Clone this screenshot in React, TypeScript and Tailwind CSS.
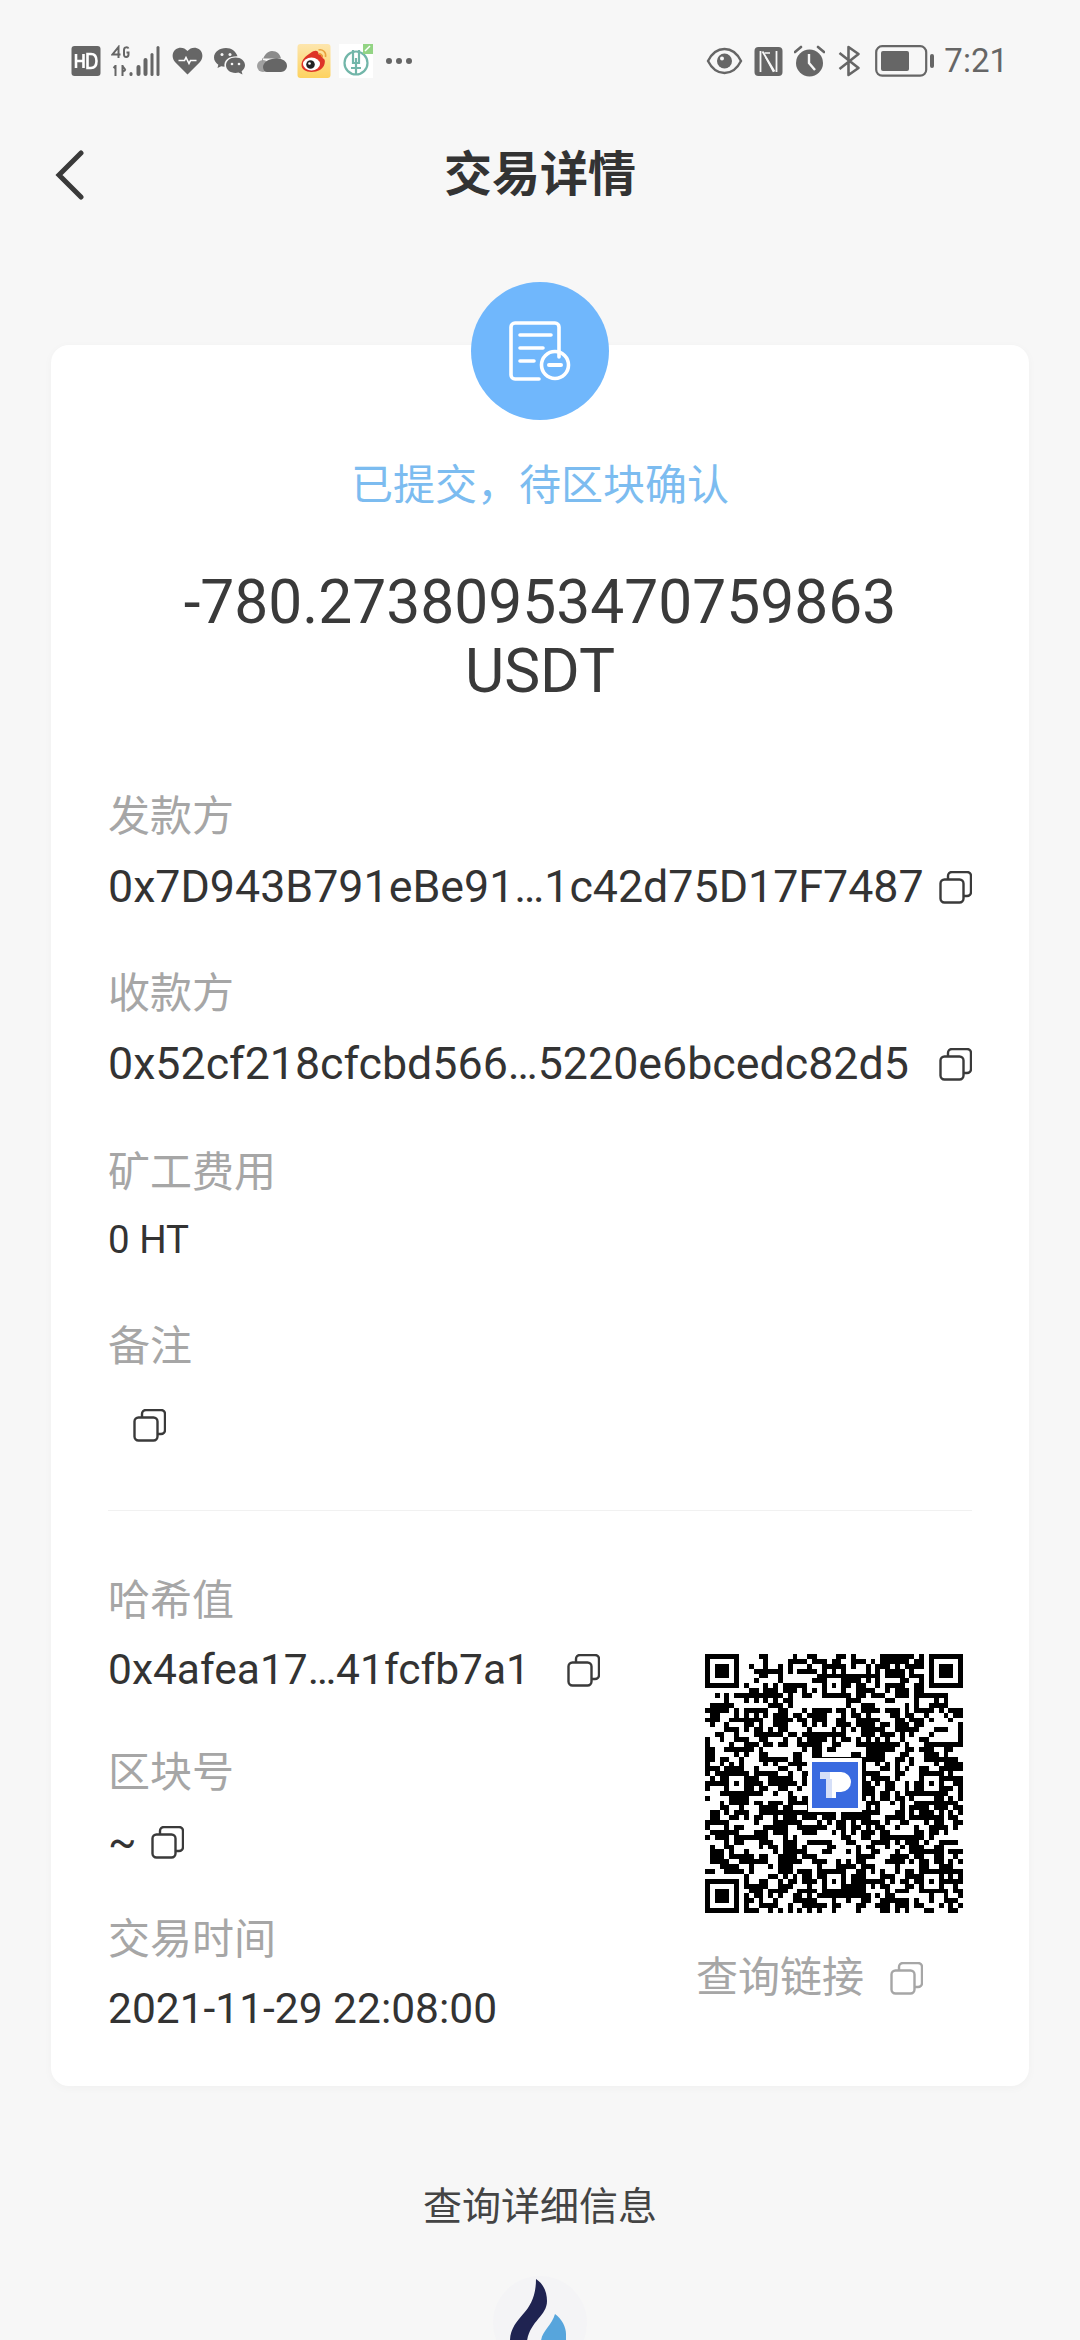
import { useMemo } from "react";

const CopyIcon = ({ className = "text-[#3a3a3a]" }: { className?: string }) => (
  <svg viewBox="0 0 33 33" className={`w-[33px] h-[33px] shrink-0 ${className}`} fill="none" stroke="currentColor" strokeWidth="2.4">
    <rect x="1.5" y="8.5" width="23" height="23" rx="4" />
    <path d="M9 8.5V5a4 4 0 0 1 4-4h15a4 4 0 0 1 4 4v16a4 4 0 0 1-4 4h-3.5" />
  </svg>
);

// fake qr, same module grid as the picture (53 x 53)
const QrCode = () => {
  const path = useMemo(() => {
    const n = 53;
    let seed = 20211129;
    const rnd = () => {
      seed = (seed * 1103515245 + 12345) & 0x7fffffff;
      return (seed >> 12) % 100;
    };
    const grid: boolean[][] = [];
    for (let y = 0; y < n; y++) {
      const row: boolean[] = [];
      for (let x = 0; x < n; x++) {
        const left = x > 0 ? row[x - 1] : false;
        const up = y > 0 ? grid[y - 1][x] : false;
        row.push(rnd() < (left || up ? 60 : 38));
      }
      grid.push(row);
    }
    // finder patterns keep a white ring, alignment ones do not
    const stamp = (ox: number, oy: number, size: number, ring: boolean) => {
      const from = ring ? -1 : 0;
      const to = ring ? size : size - 1;
      for (let y = from; y <= to; y++) {
        for (let x = from; x <= to; x++) {
          const gx = ox + x;
          const gy = oy + y;
          if (gx < 0 || gy < 0 || gx >= n || gy >= n) continue;
          const edge = x === 0 || y === 0 || x === size - 1 || y === size - 1;
          const inside = x >= 0 && y >= 0 && x < size && y < size;
          const core = x >= 2 && y >= 2 && x < size - 2 && y < size - 2;
          grid[gy][gx] = inside && (edge || core);
        }
      }
    };
    stamp(0, 0, 7, true);
    stamp(46, 0, 7, true);
    stamp(0, 46, 7, true);
    for (const [ax, ay] of [[24, 4], [4, 24], [44, 24], [24, 44], [44, 44]]) {
      stamp(ax, ay, 5, false);
    }
    let d = "";
    grid.forEach((row, y) =>
      row.forEach((on, x) => {
        if (on) d += `M${x} ${y}h1v1h-1z`;
      })
    );
    return d;
  }, []);

  return (
    <div className="relative w-[258px] h-[259px]">
      <svg viewBox="0 0 53 53" shapeRendering="crispEdges" preserveAspectRatio="none" className="w-full h-full">
        <path d={path} fill="#000" />
      </svg>
      <div className="absolute left-[103px] top-[104px] w-[54px] h-[54px] bg-white flex items-center justify-center">
        <svg viewBox="0 0 46 46" className="w-[46px] h-[46px]">
          <rect width="46" height="46" fill="#3a6be0" />
          <path d="M8 10h12v7H8z" fill="#d5dff8" />
          <path d="M14 10h6v26h-6z" fill="#d5dff8" />
          <path d="M18 10h11a10 10 0 0 1 0 20h-5v6h-4V17h-2z" fill="#fff" />
        </svg>
      </div>
    </div>
  );
};

const StatusLeft = () => (
  <div className="flex items-center">
    <svg viewBox="0 0 29 30" className="w-[30px] h-[30px]">
      <rect width="29" height="30" rx="3" fill="#666" />
      <path d="M4.500 8v14M12 8v14M4.500 15H12M16 8v14h3.500c3.500 0 5.500-2.500 5.500-7s-2-7-5.500-7z" fill="none" stroke="#fff" strokeWidth="2.600" />
    </svg>
    <svg viewBox="0 0 49 32" className="w-[50px] h-[32px] ml-[10px]">
      <g fill="none" stroke="#666" strokeWidth="2">
        <path d="M7 13V2L1 9.500h8M17 3.500c-.6-1.500-4.500-2-4.500 1.500v4.500c0 3.500 4.500 3 4.500 0V7.500h-2" />
        <path d="M4 21l-2 2M4 20v11M11 20v11M11 21l3 4M14 25l-3 2" />
      </g>
      <rect x="18" y="27" width="3" height="4" rx="1.500" fill="#666" />
      <rect x="25" y="20" width="4" height="11" rx="2" fill="#666" />
      <rect x="32" y="13" width="4" height="18" rx="2" fill="#666" />
      <rect x="39" y="8" width="3" height="23" rx="1.500" fill="#666" />
      <rect x="45" y="1" width="3" height="30" rx="1.500" fill="#666" />
    </svg>
    <svg viewBox="0 0 30 28" className="w-[31px] h-[28px] ml-[11px]">
      <path d="M15 27.500 2.500 15C-1 11-.5 5.500 3 2.500 7-.5 12 .5 15 4c3-3.500 8-4.500 12-1.500 3.500 3 4 8.500.500 12.500z" fill="#666" />
      <path d="M6 13.500h6l1.500-3 3 6 1.500-3h6" fill="none" stroke="#fff" strokeWidth="1.600" />
    </svg>
    <svg viewBox="0 0 31 28" className="w-[31px] h-[28px] ml-[11px]">
      <path d="M12 1C5.500 1 0 5 0 10.500c0 3 1.800 5.500 4.300 7.200L3.500 21l3.700-1.800c1.100.3 2.100.5 3.300.5C9.500 13 15 9 23.500 9.200 22 4.500 17.500 1 12 1z" fill="#666" />
      <path d="M21.500 10.500C16 10.500 12 14 12 18.300s4 7.700 9.500 7.700c1 0 2-.1 3-.4L28.500 27.500l-.9-3.300c2-1.500 3.400-3.500 3.400-5.900 0-4.300-4-7.800-9.500-7.800z" fill="#666" />
      <circle cx="8" cy="7.500" r="1.500" fill="#f7f7f7" />
      <circle cx="16" cy="7.500" r="1.500" fill="#f7f7f7" />
      <circle cx="18" cy="17" r="1.300" fill="#f7f7f7" />
      <circle cx="25" cy="17" r="1.300" fill="#f7f7f7" />
    </svg>
    <svg viewBox="0 0 30 21" className="w-[30px] h-[21px] ml-[12px]">
      <circle cx="6" cy="15" r="6" fill="#a0a0a0" />
      <path d="M5 12C6 5 10 0 15 0s8 3 9 7.500H5z" fill="#8b8b8b" />
      <path d="M10 21c-2 0-4-2-4-5s3-7 9-8c3-1 5-1 9 0 3 1 6 3 6 7 0 3-3 6-6 6z" fill="#666" />
    </svg>
    <svg viewBox="0 0 33 34" className="w-[34px] h-[34px] ml-[10px]">
      <defs>
        <linearGradient id="wb" x1="0" y1="0" x2="0" y2="1">
          <stop offset="0" stopColor="#fde6ae" />
          <stop offset="1" stopColor="#fdd25f" />
        </linearGradient>
      </defs>
      <rect width="33" height="34" rx="3" fill="url(#wb)" />
      <path d="M13 9c4-3 8-3 8 1 3-1 5 1 4 4 2 1 3 2 2 6-1 5-7 8-13 8-6 0-10-3-10-7 0-5 4-9 9-12z" fill="#de3327" />
      <ellipse cx="14" cy="20" rx="8.500" ry="6.500" fill="#fff" />
      <circle cx="13" cy="20.500" r="4.300" fill="#222" />
      <circle cx="12" cy="19.500" r="1.300" fill="#fff" />
      <path d="M21 6c4-1 8 2 7 7M21 10c2-.5 4 1 3.500 3" fill="none" stroke="#e9a23c" strokeWidth="1.600" />
    </svg>
    <svg viewBox="0 0 34 34" className="w-[34px] h-[34px] ml-[8px]">
      <rect width="34" height="34" fill="#fff" />
      <circle cx="17" cy="19" r="11.500" fill="none" stroke="#72b6a9" strokeWidth="2.200" />
      <path d="M14 6v13h6V6M17 14v16M12 24h10" fill="none" stroke="#72b6a9" strokeWidth="2.200" />
      <path d="M24 0h10v10z" fill="#fff" />
      <rect x="24" y="0" width="10" height="10" fill="#93d484" />
      <path d="M26 7l5-5" stroke="#fff" strokeWidth="1.500" />
    </svg>
    <div className="flex items-center gap-[4px] ml-[13px]">
      <div className="w-[6px] h-[6px] rounded-full bg-[#666]" />
      <div className="w-[6px] h-[6px] rounded-full bg-[#666]" />
      <div className="w-[6px] h-[6px] rounded-full bg-[#666]" />
    </div>
  </div>
);

const StatusRight = () => (
  <div className="flex items-center">
    <svg viewBox="0 0 36 28" className="w-[37px] h-[28px]">
      <path d="M1.500 14C5 7 11 2 18 2s13 5 16.500 12C31 21 25 26 18 26S5 21 1.500 14z" fill="none" stroke="#666" strokeWidth="2.400" />
      <circle cx="18" cy="14" r="7.500" fill="#666" />
      <circle cx="15.500" cy="11.500" r="2" fill="#f7f7f7" />
    </svg>
    <svg viewBox="0 0 28 29" className="w-[29px] h-[29px] ml-[11px]">
      <rect width="28" height="29" rx="4" fill="#666" />
      <path d="M6 4v21M8 4.500 20 24.500M22 4v21" fill="none" stroke="#f7f7f7" strokeWidth="1.800" />
      <path d="M10 6h5.500M11 10l8 15" fill="none" stroke="#f7f7f7" strokeWidth="1.500" />
    </svg>
    <svg viewBox="0 0 31 32" className="w-[31px] h-[32px] ml-[11px]">
      <circle cx="15.500" cy="18" r="13.500" fill="#666" />
      <path d="M15 9v9l6 7" fill="none" stroke="#f7f7f7" strokeWidth="2.400" />
      <path d="M1 7l6-5M30 7l-6-5" fill="none" stroke="#666" strokeWidth="2.600" strokeLinecap="round" />
    </svg>
    <svg viewBox="0 0 24 32" className="w-[25px] h-[32px] ml-[12px]">
      <path d="M2 8l19 15-10 7V2l10 7L2 24" fill="none" stroke="#666" strokeWidth="2.600" strokeLinejoin="round" />
    </svg>
    <svg viewBox="0 0 60 32" className="w-[60px] h-[32px] ml-[13px]">
      <rect x="1.200" y="1.200" width="50" height="29.500" rx="6" fill="none" stroke="#666" strokeWidth="2.200" />
      <rect x="6" y="6" width="28" height="20" rx="2" fill="#666" />
      <rect x="55" y="9" width="4" height="14" rx="2" fill="#666" />
    </svg>
    <span className="ml-[9px] text-[33px] leading-[36px] text-[#666]">7:21</span>
  </div>
);

const Label = ({ text, className = "" }: { text: string; className?: string }) => (
  <div className={`text-[42px] leading-[50px] text-[#a6a6a6] ${className}`}>{text}</div>
);

export default function App() {
  return (
    <div className="h-[2340px] overflow-hidden bg-[#f7f7f7] font-['Roboto','Noto_Sans_CJK_SC',sans-serif]">
      {/* status bar */}
      <div className="flex justify-between items-center h-[34px] mt-[44px] pl-[71px] pr-[72px] pt-0">
        <StatusLeft />
        <StatusRight />
      </div>

      {/* nav */}
      <div className="relative flex items-center justify-center h-[60px] mt-[67px]">
        <svg viewBox="0 0 30 50" className="absolute left-[55px] top-[5px] w-[30px] h-[50px]" fill="none" stroke="#3a3a3a" strokeWidth="5" strokeLinecap="round">
          <path d="M26 3 4 25l22 22" />
        </svg>
        <h1 className="text-[48px] leading-[60px] font-bold text-[#333]">交易详情</h1>
      </div>

      {/* card */}
      <div className="relative mx-[51px] mt-[140px] h-[1741px] rounded-[18px] bg-white shadow-[0_2px_10px_rgba(0,0,0,0.03)] px-[57px]">
        <div className="flex flex-col items-center">
          <div className="-mt-[63px] w-[138px] h-[138px] rounded-full bg-[#70b7fc] flex items-center justify-center">
            <svg viewBox="0 0 64 60" className="w-[64px] h-[60px] ml-[1px]" fill="none" stroke="#fff" strokeWidth="3.600" strokeLinecap="round">
              <path d="M30 58H6a4 4 0 0 1-4-4V6a4 4 0 0 1 4-4h40a4 4 0 0 1 4 4v30" />
              <path d="M11 14h31M11 27h23M11 40h14" />
              <circle cx="46" cy="44" r="13.500" />
              <path d="M40 44h12" strokeWidth="4" />
            </svg>
          </div>
          <div className="mt-[41px] text-[42px] leading-[50px] text-[#7cbcf0]">已提交，待区块确认</div>
          <div className="mt-[57px] w-full text-center text-[60.5px] leading-[69px] text-[#3a3a3a]">-780.27380953470759863 USDT</div>
        </div>

        <Label text="发款方" className="mt-[86px]" />
        <div className="mt-[20px] flex items-center justify-between text-[44.75px] leading-[50px] text-[#333]">
          <span>0x7D943B791eBe91…1c42d75D17F7487</span>
          <CopyIcon />
        </div>

        <Label text="收款方" className="mt-[57px]" />
        <div className="mt-[20px] flex items-center justify-between text-[44.75px] leading-[50px] text-[#333]">
          <span>0x52cf218cfcbd566…5220e6bcedc82d5</span>
          <CopyIcon />
        </div>

        <Label text="矿工费用" className="mt-[59px]" />
        <div className="mt-[17px] text-[38.5px] leading-[50px] text-[#333]">0 HT</div>

        <Label text="备注" className="mt-[57px]" />
        <div className="mt-[28px] h-[50px] flex items-center pl-[25px]">
          <CopyIcon />
        </div>

        <div className="mt-[60px] h-px bg-[#f1f1f1]" />

        <div className="mt-[65px] flex justify-between">
          <div>
            <Label text="哈希值" />
            <div className="mt-[19px] flex items-center gap-[37px] text-[42.5px] leading-[50px] text-[#333]">
              <span>0x4afea17…41fcfb7a1</span>
              <CopyIcon />
            </div>
            <Label text="区块号" className="mt-[53px]" />
            <div className="mt-[19px] flex items-center gap-[14px] text-[42px] leading-[50px] text-[#333]">
              <span>~</span>
              <CopyIcon />
            </div>
            <Label text="交易时间" className="mt-[48px]" />
            <div className="mt-[19px] text-[42.5px] leading-[50px] text-[#333]">2021-11-29 22:08:00</div>
          </div>
          <div className="flex flex-col items-start mr-[9px]">
            <div className="ml-[9px] mt-[78px]">
              <QrCode />
            </div>
            <div className="mt-[40px] flex items-center gap-[26px] text-[42px] leading-[50px] text-[#a6a6a6]">
              <span>查询链接</span>
              <CopyIcon className="text-[#a6a6a6]" />
            </div>
          </div>
        </div>
      </div>

      {/* footer */}
      <div className="mt-[96px] text-center text-[39px] leading-[50px] text-[#444]">查询详细信息</div>
      <div className="mt-[44px] flex justify-center">
        <div className="w-[94px] h-[94px] rounded-full bg-[#f4f4f6]">
          <svg viewBox="0 0 94 94" className="w-[94px] h-[94px]">
            <g transform="translate(-7 3)">
              <path d="M36 0C44 5 47 14 47 22 47 37 30 42 27 62H10C10 50 17 42 24 34 30 27 36 18 36 0z" transform="translate(14 0)" fill="#1f2351" />
              <path d="M55 35C62 40 66 48 66 55V62H41C42 52 52 46 55 35z" transform="translate(14 0)" fill="#57a5dc" />
            </g>
          </svg>
        </div>
      </div>
    </div>
  );
}
